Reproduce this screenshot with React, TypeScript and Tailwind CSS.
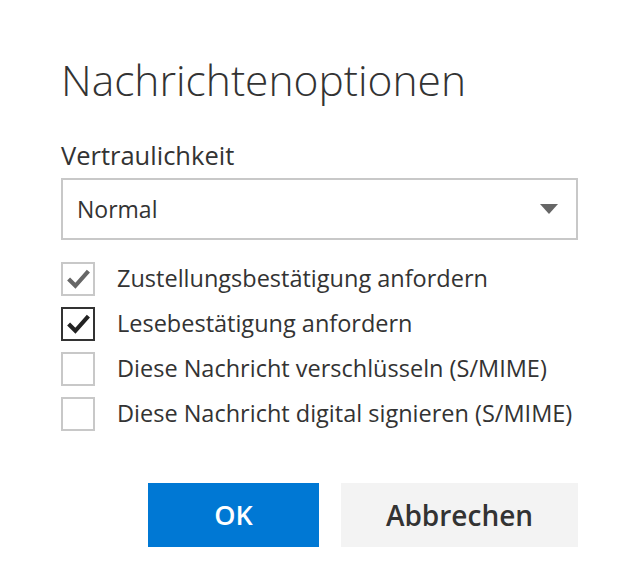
import { useState } from "react";

const font = { fontFamily: '"Open Sans", "Noto Sans", sans-serif' };

type Opt = { label: string; checked: boolean; muted?: boolean };

function CheckMark({ color }: { color: string }) {
  return (
    <svg viewBox="0 0 24 24" className="size-[25px]" fill="none">
      <path d="M2.5 12.5l6.5 6.5L21.5 5" stroke={color} strokeWidth="4" strokeLinecap="butt" />
    </svg>
  );
}

function Box({ opt, onToggle }: { opt: Opt; onToggle: () => void }) {
  const border = opt.checked && !opt.muted ? "border-[#333333]" : "border-[#c8c8c8]";
  return (
    <label className="flex h-[45px] cursor-pointer items-center" onClick={onToggle}>
      <span className={`flex size-[34px] items-center justify-center border-2 ${border} bg-white`}>
        {opt.checked && <CheckMark color={opt.muted ? "#666666" : "#222222"} />}
      </span>
      <span className="ml-[22px] text-[23.5px] leading-none text-[#333333]">{opt.label}</span>
    </label>
  );
}

export default function App() {
  const [opts, setOpts] = useState<Opt[]>([
    { label: "Zustellungsbestätigung anfordern", checked: true, muted: true },
    { label: "Lesebestätigung anfordern", checked: true },
    { label: "Diese Nachricht verschlüsseln (S/MIME)", checked: false },
    { label: "Diese Nachricht digital signieren (S/MIME)", checked: false },
  ]);

  const toggle = (i: number) =>
    setOpts((o) => o.map((x, j) => (j === i ? { ...x, checked: !x.checked, muted: false } : x)));

  return (
    <div className="h-[587px] w-[640px] bg-white pl-[61px] pr-[62px] pt-[54px]" style={font}>
      <h1 className="text-[42.5px] font-light leading-[52px] text-[#333333]">Nachrichtenoptionen</h1>

      <div className="mt-[32px] text-[25.5px] leading-[34px] text-[#333333]">Vertraulichkeit</div>

      <div className="mt-[6px] flex h-[62px] items-center justify-between border-2 border-[#c8c8c8] pl-[14px] pr-[18px]">
        <span className="text-[23px] text-[#333333]">Normal</span>
        <svg width="18" height="10" viewBox="0 0 18 10">
          <path d="M0 0h18L9 10z" fill="#666666" />
        </svg>
      </div>

      <div className="mt-[16px] flex flex-col">
        {opts.map((o, i) => (
          <Box key={o.label} opt={o} onToggle={() => toggle(i)} />
        ))}
      </div>

      <div className="mt-[47px] flex justify-end gap-[22px]">
        <button className="h-[64px] w-[171px] bg-[#0078d4] text-[27px] font-semibold text-white">OK</button>
        <button className="h-[64px] w-[237px] bg-[#f3f3f3] text-[28px] font-semibold text-[#333333]">
          Abbrechen
        </button>
      </div>
    </div>
  );
}
